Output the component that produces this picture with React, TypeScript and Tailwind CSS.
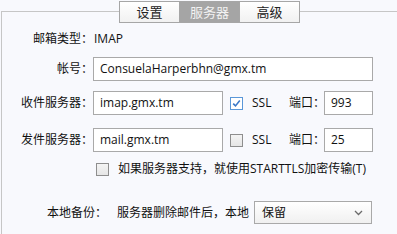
import React from "react";

const font = { fontFamily: '"Open Sans", "Noto Sans CJK SC", sans-serif' };

function Check({ checked }: { checked?: boolean }) {
    return checked ? (
        <span className="flex h-[13px] w-[13px] shrink-0 items-center justify-center border border-[#5a97d8] bg-white">
            <svg width="9" height="9" viewBox="0 0 9 9">
                <path d="M1.2 4.6 L3.5 6.9 L7.8 1.6" fill="none" stroke="#3a78c8" strokeWidth="1.6" />
            </svg>
        </span>
    ) : (
        <span className="block h-[13px] w-[13px] shrink-0 border border-[#8e8e8e] bg-gradient-to-b from-[#f4f4f4] to-[#e6e6e6]" />
    );
}

function Field({ value, className }: { value: string; className: string }) {
    return (
        <div className={`flex h-6 shrink-0 items-center border border-[#a9a9a9] bg-white pl-[6px] text-[12px] text-[#111] ${className}`}>
            {value}
        </div>
    );
}

export default function App() {
    const tabs = [
        { label: "设置", active: false },
        { label: "服务器", active: true },
        { label: "高级", active: false },
    ];

    return (
        <div className="h-[234px] w-[397px] overflow-hidden whitespace-nowrap bg-[#f8f9fd] pt-[11px] text-[#111]" style={font}>
            <div className="ml-px h-[223px] border-l border-t border-[#c6c6c6]">

                {/* Tabs over the top line */}
                <div className="-mt-[11px] ml-[118px] flex h-[23px]">
                    {tabs.map((t) => (
                        <div
                            key={t.label}
                            className={`-ml-px flex h-[22px] w-[61px] items-center justify-center border border-[#a6a6a6] pt-px text-[13px] ${t.active
                                ? "bg-[#a5a5a5] text-[#f2f2f2]"
                                : "bg-gradient-to-b from-white to-[#f1f1f1] text-[#222]"
                                }`}
                        >
                            {t.label}
                        </div>
                    ))}
                </div>

                {/* Mail type */}
                <div className="mt-[7px] flex h-4 items-center text-[12px]">
                    <span className="w-[91px] text-right">邮箱类型：</span>
                    <span className="pl-px">IMAP</span>
                </div>

                {/* Account */}
                <div className="mt-[10px] flex h-6 items-center text-[12px]">
                    <span className="w-[91px] text-right">帐号：</span>
                    <Field value="ConsuelaHarperbhn@gmx.tm" className="w-[280px]" />
                </div>

                {/* Incoming */}
                <div className="mt-[10px] flex h-6 items-center text-[12px]">
                    <span className="w-[91px] text-right">收件服务器：</span>
                    <Field value="imap.gmx.tm" className="w-[130px]" />
                    <span className="ml-[7px] flex"><Check checked /></span>
                    <span className="ml-[9px] w-[37px]">SSL</span>
                    <span className="w-[35px]">端口：</span>
                    <Field value="993" className="w-[49px]" />
                </div>

                {/* Outgoing */}
                <div className="mt-[13px] flex h-6 items-center text-[12px]">
                    <span className="w-[91px] text-right">发件服务器：</span>
                    <Field value="mail.gmx.tm" className="w-[130px]" />
                    <span className="ml-[7px] flex"><Check /></span>
                    <span className="ml-[9px] w-[37px]">SSL</span>
                    <span className="w-[35px]">端口：</span>
                    <Field value="25" className="w-[49px]" />
                </div>

                {/* STARTTLS */}
                <div className="ml-[94px] mt-[9px] flex h-4 items-center text-[12px]">
                    <Check />
                    <span className="ml-[9px]">如果服务器支持，就使用STARTTLS加密传输(T)</span>
                </div>

                {/* Local backup */}
                <div className="mt-[24px] flex h-[23px] items-center text-[12px]">
                    <span className="ml-[45px] w-[70px]">本地备份：</span>
                    <span className="w-[137px]">服务器删除邮件后，本地</span>
                    <div className="flex h-[23px] w-[118px] items-center justify-between border border-[#a9a9a9] bg-gradient-to-b from-white to-[#f0f0f0] pl-[7px] pr-[8px]">
                        <span>保留</span>
                        <svg width="9" height="6" viewBox="0 0 9 6">
                            <path d="M1 1 L4.5 4.5 L8 1" fill="none" stroke="#6b6b6b" strokeWidth="1.3" />
                        </svg>
                    </div>
                </div>

            </div>
        </div>
    );
}
